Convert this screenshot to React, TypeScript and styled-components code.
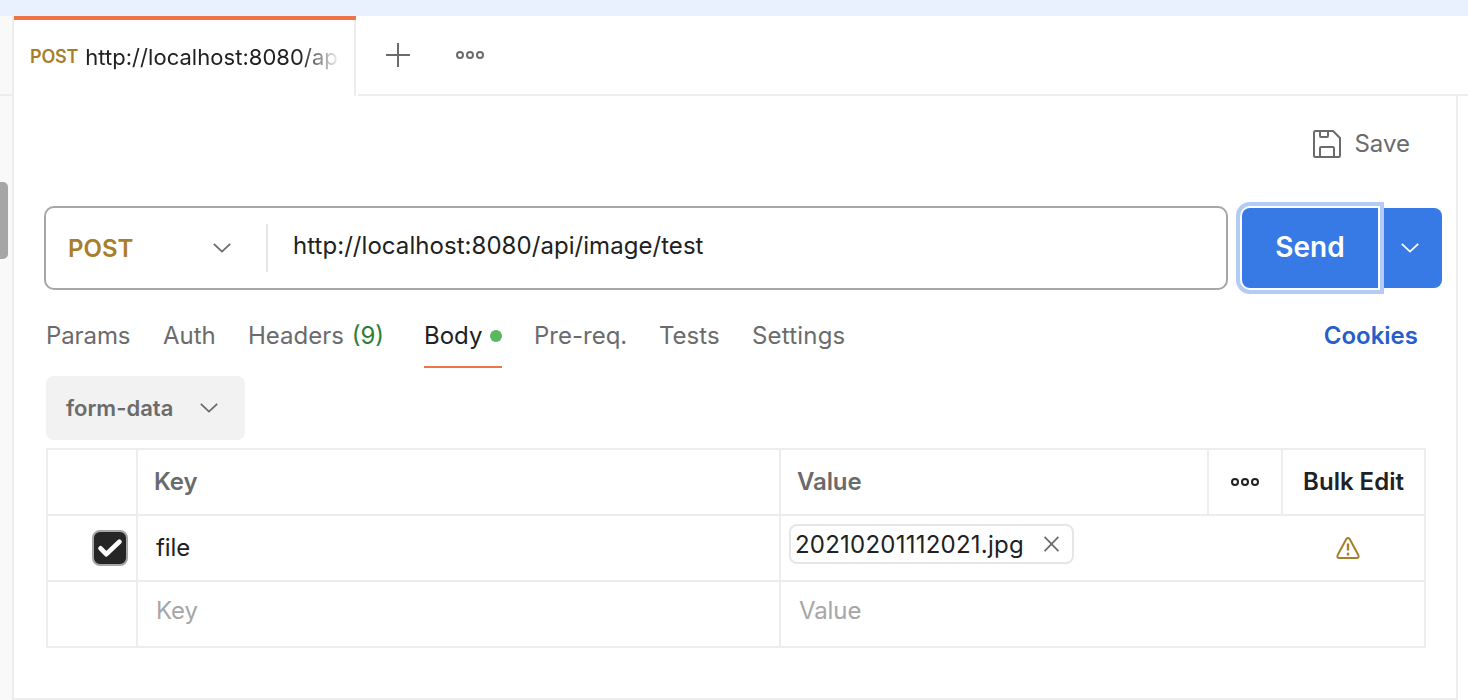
import React from 'react';
import styled, { createGlobalStyle } from 'styled-components';

const line = '#ededed';
const ink = '#212121';
const muted = '#6b6b6b';
const amber = '#a97e2a';
const orange = '#ed7447';
const blue = '#3779e5';

const GlobalStyle = createGlobalStyle`
  * { box-sizing: border-box; }
  body {
    margin: 0;
    background: #fff;
    color: ${ink};
    font-family: Inter, sans-serif;
    font-size: 24px;
    line-height: 32px;
  }
  svg { display: block; flex: none; }
`;

const Window = styled.div`
  width: 1468px;
  height: 700px;
  display: flex;
  flex-direction: column;
  overflow: hidden;
  background: #fff;
`;

const TopStrip = styled.div`
  height: 16px;
  background: #e9f0fe;
`;

const Columns = styled.div`
  flex: 1;
  display: flex;
`;

const Rail = styled.aside`
  width: 14px;
  background: #f9f9f9;
  border-right: 2px solid ${line};
`;

const RailHead = styled.div`
  height: 80px;
  border-bottom: 2px solid ${line};
`;

const RailThumb = styled.div`
  width: 8px;
  height: 77px;
  margin-top: 86px;
  border-radius: 0 5px 5px 0;
  background: #a6a6a6;
`;

const Main = styled.main`
  flex: 1;
  display: flex;
  flex-direction: column;
`;

const TabBar = styled.div`
  height: 80px;
  display: flex;
`;

const OpenTab = styled.div`
  width: 342px;
  border-top: 4px solid ${orange};
  box-shadow: inset -2px 0 ${line};
  padding: 0 16px 2px;
  display: flex;
  align-items: center;
`;

const TabMethod = styled.span`
  color: ${amber};
  font-size: 18px;
  font-weight: 600;
  letter-spacing: -0.2px;
  margin-right: 7px;
`;

const TabTitle = styled.span`
  width: 256px;
  white-space: nowrap;
  font-size: 22px;
  letter-spacing: 0.04px;
  mask-image: linear-gradient(90deg, #000 216px, transparent 256px);
`;

const TabActions = styled.div`
  flex: 1;
  margin-left: 2px;
  padding: 0 0 0 28px;
  display: flex;
  align-items: center;
  gap: 46px;
  border-bottom: 2px solid ${line};
`;

const Request = styled.section`
  width: 1444px;
  flex: 1;
  border-right: 2px solid ${line};
  border-bottom: 2px solid ${line};
`;

const SaveRow = styled.div`
  height: 110px;
  padding: 32px 46px 0 0;
  display: flex;
  justify-content: flex-end;
  align-items: flex-start;
`;

const SaveButton = styled.div`
  display: flex;
  align-items: center;
  gap: 13px;
  color: ${muted};
`;

const UrlRow = styled.div`
  padding-left: 30px;
  display: flex;
  align-items: center;
`;

const UrlBox = styled.div`
  width: 1184px;
  height: 84px;
  border: 2px solid #a6a6a6;
  border-radius: 10px;
  display: flex;
  align-items: center;
`;

const MethodPicker = styled.div`
  width: 222px;
  height: 48px;
  padding: 0 35px 0 22px;
  display: flex;
  align-items: center;
  justify-content: space-between;
  border-right: 2px solid #e6e6e6;
  color: ${amber};
  font-weight: 600;
`;

const MethodName = styled.span`
  padding-top: 2px;
`;

const UrlText = styled.span`
  padding: 0 0 4px 25px;
  letter-spacing: 0.05px;
`;

const SendButton = styled.div`
  width: 136px;
  height: 80px;
  margin-left: 14px;
  padding-bottom: 2px;
  display: flex;
  align-items: center;
  justify-content: center;
  border-radius: 8px 0 0 8px;
  background: ${blue};
  box-shadow: 0 0 0 2px #fff, 0 0 0 6px #b3cbf7;
  color: #fff;
  font-size: 28px;
  font-weight: 600;
`;

const SendMenu = styled.div`
  width: 58px;
  height: 80px;
  margin-left: 6px;
  padding-right: 6px;
  display: flex;
  align-items: center;
  justify-content: center;
  border-radius: 0 8px 8px 0;
  background: ${blue};
`;

const SectionTabs = styled.nav`
  height: 78px;
  padding: 0 38px 0 32px;
  display: flex;
`;

const SectionTab = styled.div<{ $width: number; $active?: boolean; $spacing?: number }>`
  width: ${(p) => p.$width}px;
  margin-right: 32px;
  padding-top: 30px;
  display: flex;
  align-items: flex-start;
  justify-content: space-between;
  white-space: nowrap;
  letter-spacing: ${(p) => p.$spacing ?? 0}px;
  color: ${(p) => (p.$active ? ink : muted)};
  border-bottom: 2px solid ${(p) => (p.$active ? orange : 'transparent')};
`;

const Count = styled.span`
  margin-left: 1px;
  color: #2d7d33;
`;

const Dot = styled.i`
  width: 12px;
  height: 12px;
  margin-top: 10px;
  border-radius: 50%;
  background: #58b75f;
`;

const Cookies = styled.div`
  margin-left: auto;
  padding-top: 30px;
  color: #255fc7;
  font-weight: 600;
`;

const BodyType = styled.div`
  width: 199px;
  height: 64px;
  margin: 8px 0 8px 32px;
  padding: 0 27px 0 20px;
  display: flex;
  align-items: center;
  justify-content: space-between;
  border-radius: 8px;
  background: #f2f2f2;
  color: ${muted};
  font-size: 22px;
  font-weight: 600;
`;

const Table = styled.div`
  width: 1380px;
  margin-left: 32px;
  border: 2px solid ${line};
`;

const Row = styled.div<{ $head?: boolean }>`
  height: 66px;
  display: grid;
  grid-template-columns: ${(p) => (p.$head ? '90px 643px 428px 74px 141px' : '90px 643px 502px 141px')};
  border-bottom: 2px solid ${line};
  &:last-child { height: 64px; border-bottom: 0; }
`;

const Cell = styled.div<{ $line?: boolean; $pad?: string; $center?: boolean; $tone?: string; $bold?: boolean }>`
  display: flex;
  align-items: center;
  justify-content: ${(p) => (p.$center ? 'center' : 'flex-start')};
  padding: ${(p) => p.$pad ?? '0'};
  border-right: ${(p) => (p.$line ? `2px solid ${line}` : '0')};
  color: ${(p) => p.$tone ?? ink};
  font-weight: ${(p) => (p.$bold ? 600 : 400)};
  letter-spacing: -0.1px;
  white-space: nowrap;
`;

const BulkEdit = styled.span`
  letter-spacing: 0;
`;

const Checkbox = styled.div`
  width: 36px;
  height: 36px;
  display: grid;
  place-items: center;
  border: 2px solid #a6a6a6;
  border-radius: 8px;
  background: #262626;
`;

const FileChip = styled.div`
  width: 285px;
  height: 40px;
  padding: 0 13px 0 4px;
  display: flex;
  align-items: center;
  justify-content: space-between;
  border: 2px solid #e6e6e6;
  border-radius: 8px;
`;

const FileName = styled.span`
  padding-top: 1px;
  letter-spacing: 0.23px;
`;

const Chevron = ({ color = muted }: { color?: string }) => (
  <svg width="18" height="12" viewBox="0 0 18 12" fill="none" stroke={color} strokeWidth="1.8">
    <path d="M0.8 1.8 9 9.6 17.2 1.8" />
  </svg>
);

const Dots = ({ color = muted }: { color?: string }) => (
  <svg width="28" height="8" viewBox="0 0 28 8" fill="none" stroke={color} strokeWidth="2">
    <circle cx="4" cy="4" r="3" />
    <circle cx="14" cy="4" r="3" />
    <circle cx="24" cy="4" r="3" />
  </svg>
);

const Plus = () => (
  <svg width="24" height="24" viewBox="0 0 24 24" stroke={muted} strokeWidth="2">
    <path d="M12 0V24M0 12H24" />
  </svg>
);

const Floppy = () => (
  <svg width="28" height="28" viewBox="0 0 28 28" fill="none" stroke={muted} strokeWidth="2" strokeLinejoin="round">
    <path d="M2.5 1H20L27 8V25.5Q27 27 25.5 27H2.5Q1 27 1 25.5V2.5Q1 1 2.5 1Z" />
    <path d="M7 1V6Q7 7 8 7H14Q15 7 15 6V1" />
    <path d="M7 27V18.2Q7 17 8.2 17H19.8Q21 17 21 18.2V27" />
  </svg>
);

const Check = () => (
  <svg width="24" height="18" viewBox="0 0 24 18" fill="none" stroke="#fff" strokeWidth="4.6" strokeLinecap="round" strokeLinejoin="round">
    <path d="M2.6 9.3 8.2 15.2 21.4 2.8" />
  </svg>
);

const Close = () => (
  <svg width="15" height="16" viewBox="0 0 15 16" stroke={muted} strokeWidth="1.8">
    <path d="M0.6 0.8 14.4 15.2M14.4 0.8 0.6 15.2" />
  </svg>
);

const Warning = () => (
  <svg width="24" height="22" viewBox="0 0 24 22" fill="none" stroke={amber} strokeWidth="2" strokeLinejoin="round">
    <path d="M10.3 2.1Q12 0 13.7 2.1L22.3 18Q23.4 20.8 21 21H3Q0.6 20.8 1.7 18Z" />
    <path d="M12 6.5V13.5M12 15.8V18.4" strokeWidth="2.4" />
  </svg>
);

export default function App() {
  return (
    <Window>
      <GlobalStyle />
      <TopStrip />
      <Columns>
        <Rail>
          <RailHead />
          <RailThumb />
        </Rail>
        <Main>
          <TabBar>
            <OpenTab>
              <TabMethod>POST</TabMethod>
              <TabTitle>http://localhost:8080/ap</TabTitle>
            </OpenTab>
            <TabActions>
              <Plus />
              <Dots />
            </TabActions>
          </TabBar>
          <Request>
            <SaveRow>
              <SaveButton>
                <Floppy />
                <span>Save</span>
              </SaveButton>
            </SaveRow>
            <UrlRow>
              <UrlBox>
                <MethodPicker>
                  <MethodName>POST</MethodName>
                  <Chevron />
                </MethodPicker>
                <UrlText>http://localhost:8080/api/image/test</UrlText>
              </UrlBox>
              <SendButton>Send</SendButton>
              <SendMenu>
                <Chevron color="#fff" />
              </SendMenu>
            </UrlRow>
            <SectionTabs>
              <SectionTab $width={85} $spacing={-0.1}>Params</SectionTab>
              <SectionTab $width={53}>Auth</SectionTab>
              <SectionTab $width={144}>
                <span>Headers <Count>(9)</Count></span>
              </SectionTab>
              <SectionTab $width={78} $active>
                <span>Body</span>
                <Dot />
              </SectionTab>
              <SectionTab $width={93}>Pre-req.</SectionTab>
              <SectionTab $width={61}>Tests</SectionTab>
              <SectionTab $width={94} $spacing={0.2}>Settings</SectionTab>
              <Cookies>Cookies</Cookies>
            </SectionTabs>
            <BodyType>
              <span>form-data</span>
              <Chevron />
            </BodyType>
            <Table>
              <Row $head>
                <Cell $line />
                <Cell $line $bold $tone={muted} $pad="0 16px">Key</Cell>
                <Cell $line $bold $tone={muted} $pad="0 16px">Value</Cell>
                <Cell $line $center><Dots color={ink} /></Cell>
                <Cell $bold $center><BulkEdit>Bulk Edit</BulkEdit></Cell>
              </Row>
              <Row>
                <Cell $line $pad="0 0 0 44px"><Checkbox><Check /></Checkbox></Cell>
                <Cell $line $pad="0 18px">file</Cell>
                <Cell $pad="0 0 8px 8px">
                  <FileChip>
                    <FileName>20210201112021.jpg</FileName>
                    <Close />
                  </FileChip>
                </Cell>
                <Cell $pad="0 0 0 53px"><Warning /></Cell>
              </Row>
              <Row>
                <Cell $line />
                <Cell $line $tone="#a6a6a6" $pad="0 18px 6px">Key</Cell>
                <Cell $tone="#a6a6a6" $pad="0 18px 6px">Value</Cell>
                <Cell />
              </Row>
            </Table>
          </Request>
        </Main>
      </Columns>
    </Window>
  );
}
